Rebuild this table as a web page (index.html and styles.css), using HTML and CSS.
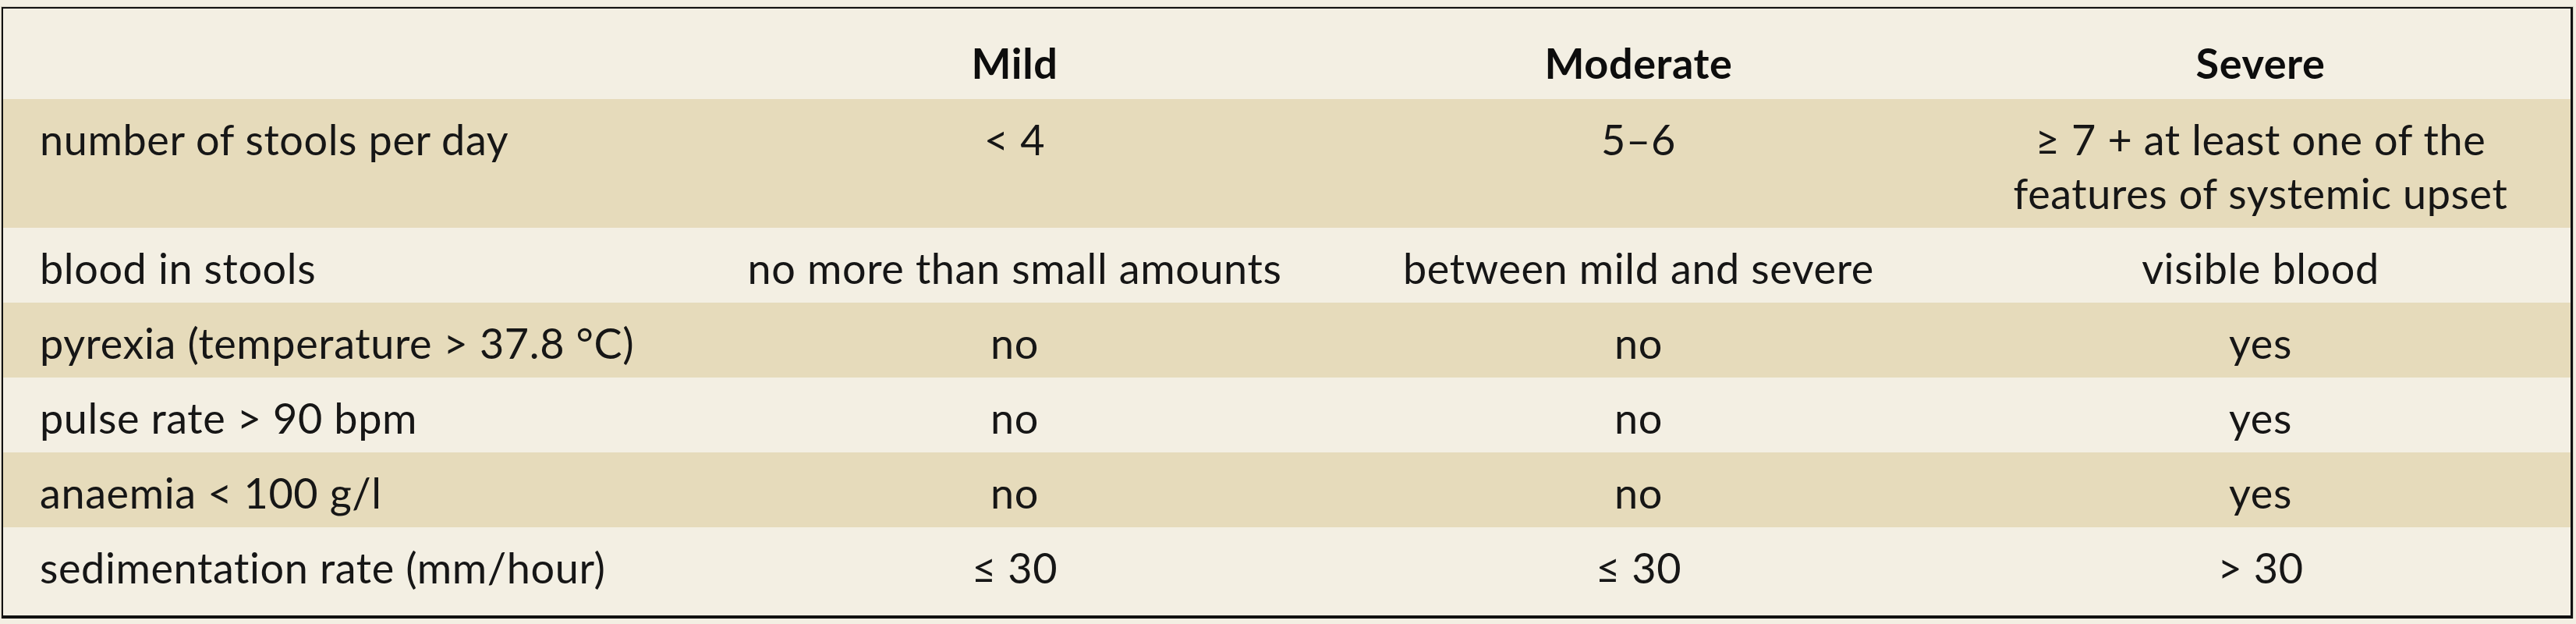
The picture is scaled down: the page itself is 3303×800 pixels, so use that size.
FILE: index.html
```html
<!DOCTYPE html>
<html lang="en">
<head>
<meta charset="utf-8">
<title>Severity of ulcerative colitis</title>
<link rel="stylesheet" href="styles.css">
</head>
<body>
<div class="page">
  <table class="grading">
    <colgroup>
      <col class="c-label">
      <col class="c-data">
      <col class="c-data">
      <col class="c-last">
    </colgroup>
    <thead>
      <tr class="head">
        <th class="label"></th>
        <th>Mild</th>
        <th>Moderate</th>
        <th>Severe</th>
      </tr>
    </thead>
    <tbody>
      <tr class="dark">
        <td class="label">number of stools per day</td>
        <td>&lt; 4</td>
        <td>5–6</td>
        <td>≥ 7 + at least one of the<br>features of systemic upset</td>
      </tr>
      <tr class="light">
        <td class="label">blood in stools</td>
        <td>no more than small amounts</td>
        <td>between mild and severe</td>
        <td>visible blood</td>
      </tr>
      <tr class="dark">
        <td class="label">pyrexia (temperature &gt; 37.8 °C)</td>
        <td>no</td>
        <td>no</td>
        <td>yes</td>
      </tr>
      <tr class="light">
        <td class="label">pulse rate &gt; 90 bpm</td>
        <td>no</td>
        <td>no</td>
        <td>yes</td>
      </tr>
      <tr class="dark">
        <td class="label">anaemia &lt; 100 g/l</td>
        <td>no</td>
        <td>no</td>
        <td>yes</td>
      </tr>
      <tr class="light last">
        <td class="label">sedimentation rate (mm/hour)</td>
        <td>≤ 30</td>
        <td>≤ 30</td>
        <td>&gt; 30</td>
      </tr>
    </tbody>
  </table>
</div>
</body>
</html>
```

FILE: styles.css
```css
html, body {
  margin: 0;
  padding: 0;
  background: #f3efe3;
}

.page {
  padding: 9px 0 0 2px;
}

.grading {
  width: 3297px;
  table-layout: fixed;
  border-collapse: separate;
  border-spacing: 0;
  border-style: solid;
  border-color: #111111;
  border-width: 2px 3px 4px 2px;
  box-shadow: 0 0 0 1px rgba(120, 110, 90, 0.25);
  font-family: Lato, "Open Sans", sans-serif;
  font-size: 54px;
  line-height: 69px;
  letter-spacing: 0.6px;
  font-variant-ligatures: none;
  font-feature-settings: "liga" 0, "clig" 0;
  color: #161616;
}

.c-label { width: 897px; }
.c-data { width: 800px; }
.c-last { width: 795px; }

.grading th,
.grading td {
  padding: 17px 0 10px;
  text-align: center;
  vertical-align: top;
  white-space: nowrap;
}

.grading th {
  font-weight: 700;
  padding: 35px 0 12px;
  color: #0d0d0d;
}

.grading .label {
  text-align: left;
  padding-left: 47px;
}

.head { background: #f3efe3; }
.light { background: #f3efe3; }
.dark { background: #e6dbbb; }

.grading tr.last td {
  padding-bottom: 27px;
}
```
